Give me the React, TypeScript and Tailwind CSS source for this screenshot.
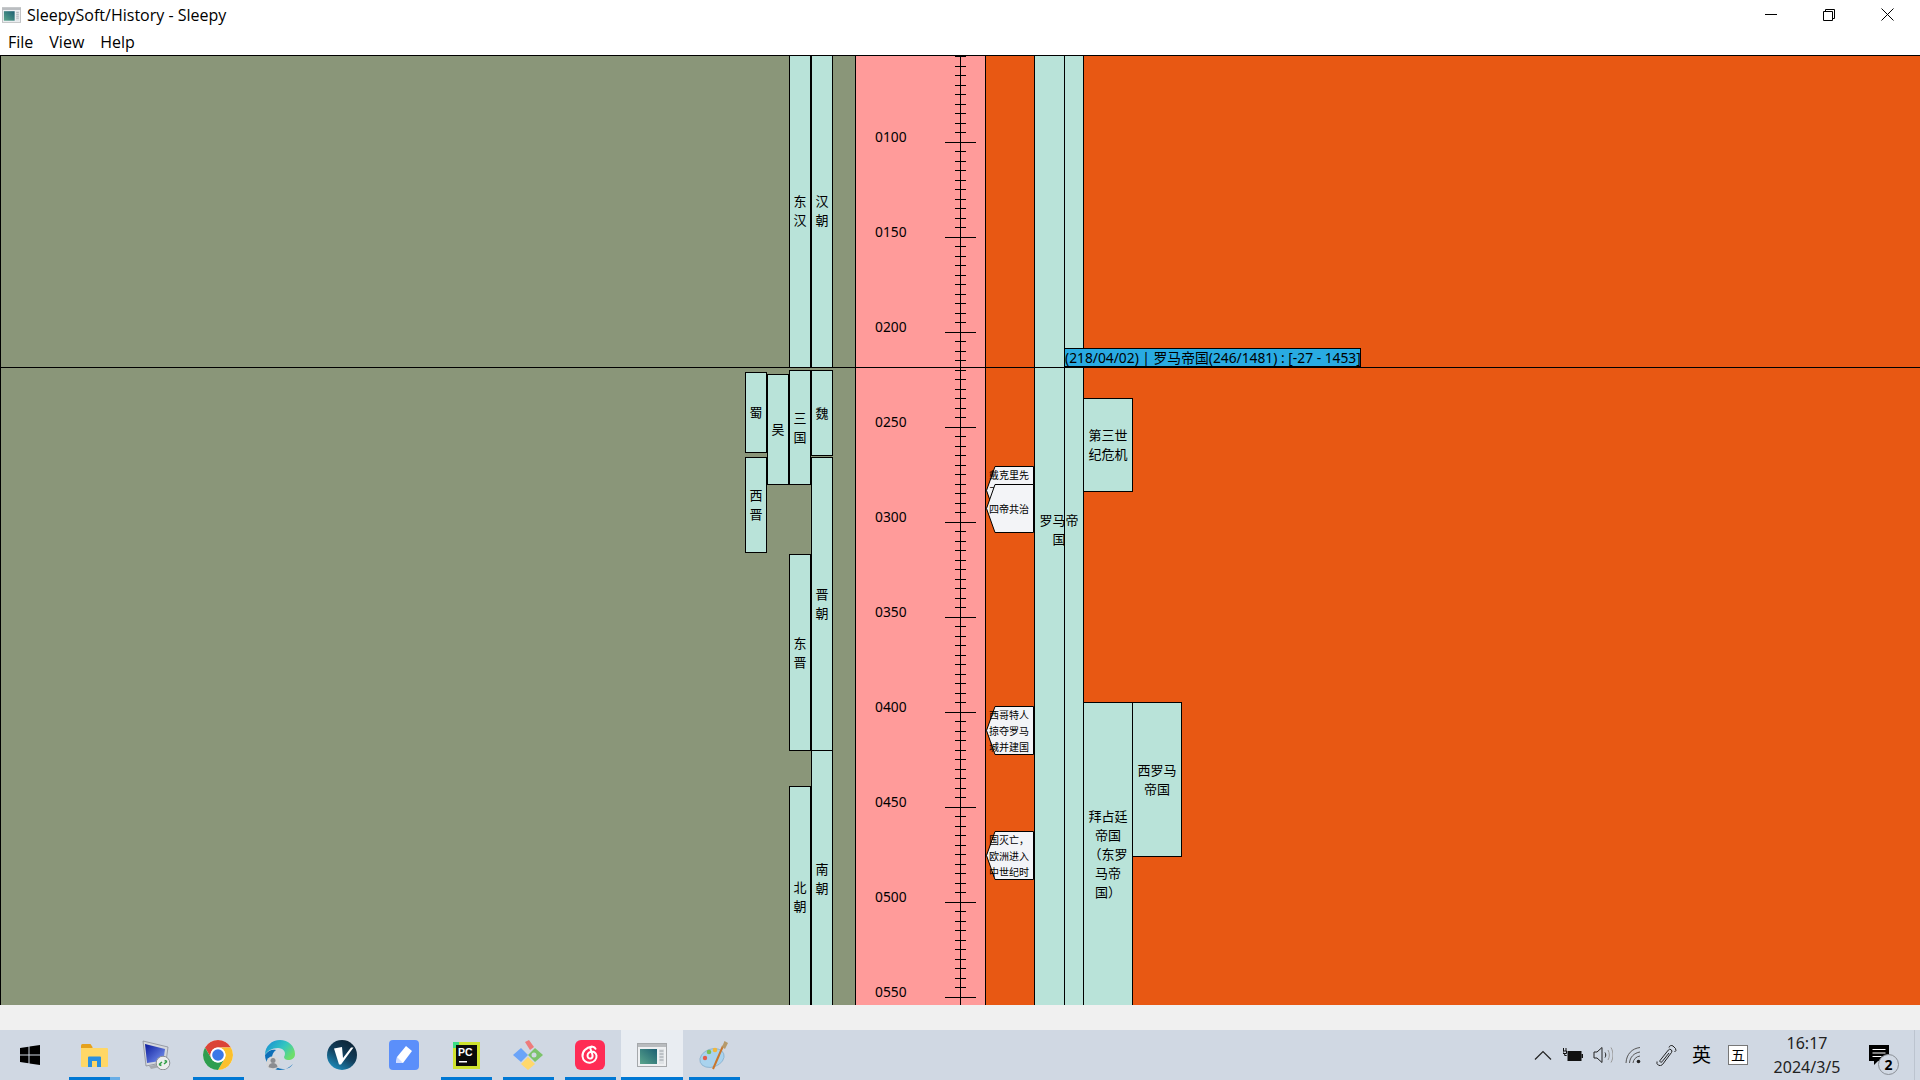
import React from "react";

const blocks = [
  { pos: "left-[789px] top-[-2px] w-[22px] h-[315px]", text: "东汉" },
  { pos: "left-[811px] top-[-2px] w-[22px] h-[315px]", text: "汉朝" },
  { pos: "left-[745px] top-[317px] w-[22px] h-[81px]", text: "蜀" },
  { pos: "left-[745px] top-[402px] w-[22px] h-[96px]", text: "西晋" },
  { pos: "left-[767px] top-[319px] w-[22px] h-[111px]", text: "吴" },
  { pos: "left-[789px] top-[315px] w-[22px] h-[115px]", text: "三国" },
  { pos: "left-[811px] top-[315px] w-[22px] h-[86px]", text: "魏" },
  { pos: "left-[811px] top-[402px] w-[22px] h-[294px]", text: "晋朝" },
  { pos: "left-[789px] top-[499px] w-[22px] h-[197px]", text: "东晋" },
  { pos: "left-[811px] top-[695px] w-[22px] h-[257px]", text: "南朝" },
  { pos: "left-[789px] top-[731px] w-[22px] h-[221px]", text: "北朝" },
  { pos: "left-[1034px] top-[-2px] w-[50px] h-[954px]", text: "罗马帝国" },
  { pos: "left-[1083px] top-[343px] w-[50px] h-[94px]", text: "第三世纪危机" },
  { pos: "left-[1083px] top-[647px] w-[50px] h-[305px]", text: "拜占廷帝国（东罗马帝国）" },
  { pos: "left-[1132px] top-[647px] w-[50px] h-[155px]", text: "西罗马帝国" },
];

const yearLabels = [
  { pos: "top-[73px]", text: "0100" },
  { pos: "top-[168px]", text: "0150" },
  { pos: "top-[263px]", text: "0200" },
  { pos: "top-[358px]", text: "0250" },
  { pos: "top-[453px]", text: "0300" },
  { pos: "top-[548px]", text: "0350" },
  { pos: "top-[643px]", text: "0400" },
  { pos: "top-[738px]", text: "0450" },
  { pos: "top-[833px]", text: "0500" },
  { pos: "top-[928px]", text: "0550" },
];

const events = [
  { pos: "top-[411px]", lines: ["戴克里先", "了", "\u00a0"] },
  { pos: "top-[429px]", lines: ["四帝共治"] },
  { pos: "top-[651px]", lines: ["西哥特人", "掠夺罗马", "城并建国"] },
  { pos: "top-[776px]", lines: ["国灭亡，", "欧洲进入", "中世纪时"] },
];

function Ruler() {
  // one tick every 5 years, 9.5px apart
  const ticks = [];
  for (let k = -9; k <= 90; k++) {
    const y = Math.floor(87.3 + 9.5 * k) + 0.5;
    const major = k % 10 === 0;
    ticks.push(
      <line key={k} x1={major ? 0 : 10} x2={major ? 31 : 21} y1={y} y2={y} stroke="#000" />
    );
  }
  return (
    <svg className="absolute left-[945px] top-0 w-[32px] h-[950px]" viewBox="0 0 32 950" shapeRendering="crispEdges">
      <line x1="15.5" x2="15.5" y1="0" y2="950" stroke="#000" />
      {ticks}
    </svg>
  );
}

function EventTag({ pos, lines }: { pos: string; lines: string[] }) {
  return (
    <div className={`absolute left-[985px] w-[49px] h-[49px] ${pos}`}>
      <svg className="absolute inset-0 w-full h-full" viewBox="0 0 49 49">
        <polygon points="10,0.5 48.5,0.5 48.5,48.5 10,48.5 1.5,24.5" fill="#f3f4f7" stroke="#000" />
      </svg>
      <div className="relative h-full flex flex-col justify-center pl-[4px] text-[10px] leading-[16px] text-black whitespace-nowrap">
        {lines.map((l) => (
          <div key={l}>{l}</div>
        ))}
      </div>
    </div>
  );
}

function Chart() {
  return (
    <div className="relative h-[950px] bg-[#8a9679] overflow-hidden">
      <div className="absolute left-[855px] top-0 w-[131px] h-full bg-[#ff9b9a] border-x border-black" />
      <div className="absolute left-[985px] top-0 right-0 h-full bg-[#e85813] border-l border-black" />
      {yearLabels.map((y) => (
        <div key={y.text} className={`absolute left-[875px] h-[18px] leading-[18px] text-[13.800px] text-black ${y.pos}`}>
          {y.text}
        </div>
      ))}
      <Ruler />
      {blocks.map((b) => (
        <div
          key={b.text}
          className={`absolute flex items-center justify-center bg-[#b9e3d9] border border-black px-[3px] text-[13px] leading-[19px] text-center text-black ${b.pos}`}
        >
          <span className="w-full">{b.text}</span>
        </div>
      ))}
      {events.map((e) => (
        <EventTag key={e.lines[0]} pos={e.pos} lines={e.lines} />
      ))}
      {/* chart frame and crosshair */}
      <div className="absolute left-0 right-0 top-0 h-px bg-black" />
      <div className="absolute left-0 top-0 bottom-0 w-px bg-black" />
      <div className="absolute left-0 right-0 top-[312px] h-px bg-black" />
      <div className="absolute left-[1064px] top-0 bottom-0 w-px bg-black" />
      <div className="absolute left-[1064px] top-[293px] w-[297px] h-[19px] bg-[#29abe2] border border-black text-[13.800px] leading-[17px] text-black whitespace-nowrap">
        (218/04/02) | 罗马帝国(246/1481) : [-27 - 1453]
      </div>
    </div>
  );
}

function AppIcon({ className }: { className: string }) {
  return (
    <svg className={className} viewBox="0 0 30 24">
      <rect x="0.5" y="0.5" width="29" height="23" fill="#eef0f2" stroke="#a5a8ab" />
      <rect x="1" y="1" width="28" height="3" fill="#b8bbbe" />
      <rect x="3" y="6" width="17" height="15" fill="url(#appPanel)" />
      <rect x="22" y="6" width="5" height="15" fill="#dfe3e6" />
      <path d="M22.5 8h4M22.5 11h4M22.5 14h4M22.5 17h4" stroke="#9aa0a6" />
      <defs>
        <linearGradient id="appPanel" x1="0" y1="1" x2="1" y2="0">
          <stop offset="0" stopColor="#5aa58c" />
          <stop offset="1" stopColor="#1c5f72" />
        </linearGradient>
      </defs>
    </svg>
  );
}

const iconClass = "w-[30px] h-[30px]";

function FolderIcon() {
  return (
    <svg className={iconClass} viewBox="0 0 30 30">
      <path d="M2 5.5a1.5 1.5 0 0 1 1.5-1.5h8l2 3v3H2z" fill="#e5a11c" />
      <path d="M2 8h26a1 1 0 0 1 1 1v17a1 1 0 0 1-1 1H3a1 1 0 0 1-1-1z" fill="#ffd766" />
      <path d="M9 27V17.5a1 1 0 0 1 1-1h11a1 1 0 0 1 1 1V27h-4v-6h-5v6z" fill="#2a8fe0" />
    </svg>
  );
}

function RemoteIcon() {
  return (
    <svg className={iconClass} viewBox="0 0 30 30">
      <path d="M2 1l25 6-2 15-20 4z" fill="#d4d7dc" stroke="#7e838c" strokeWidth="0.7" />
      <path d="M4 4l20 5-1.6 11.500L6 23z" fill="url(#remoteBlue)" />
      <path d="M8 26l11-2v3l-9 2z" fill="#a6a9ae" />
      <circle cx="22" cy="23" r="6.800" fill="#eceeee" stroke="#8d9094" />
      <path d="M18 24.500l3-2.500M18 24.500l2.400 1M26 21.500l-3 2.500M26 21.500l-2.400-1" stroke="#2f9e44" strokeWidth="1.500" />
      <defs>
        <linearGradient id="remoteBlue" x1="0" y1="0" x2="1" y2="1">
          <stop offset="0" stopColor="#0a1a9c" />
          <stop offset="1" stopColor="#7f9cf5" />
        </linearGradient>
      </defs>
    </svg>
  );
}

function ChromeIcon() {
  const seg = "M2.010 7.500A15 15 0 0 1 27.990 7.500H15A7.500 7.500 0 0 0 8.500 18.750Z";
  return (
    <svg className={iconClass} viewBox="0 0 30 30">
      <circle cx="15" cy="15" r="15" fill="#fff" />
      <path d={seg} fill="#db4437" />
      <path d={seg} fill="#fbc02d" transform="rotate(120 15 15)" />
      <path d={seg} fill="#2e9e4f" transform="rotate(240 15 15)" />
      <circle cx="15" cy="15" r="7.500" fill="#fff" />
      <circle cx="15" cy="15" r="5.800" fill="#3b78e7" />
    </svg>
  );
}

function EdgeIcon() {
  return (
    <svg className={iconClass} viewBox="0 0 30 30">
      <path d="M0 15C0 6 7 0 15 0c8 0 15 6 15 14 0 4-3 6-7 6-2 0-4-1-4-3 3-5-1-9-6-9-6 0-11 3-13 7z" fill="url(#edgeTop)" />
      <path d="M0 15c3-5 8-6 11-5-3 2-4 5-4 8 0 6 5 11 11 11 5 0 8-2 10-5-3 3-8 6-13 6C7 30 0 23 0 15z" fill="#0c6fb8" />
      <circle cx="8" cy="23" r="6.800" fill="#d5d6d8" />
      <circle cx="8" cy="20.500" r="2.500" fill="#8a8c90" />
      <path d="M3.500 27c.5-3 2-4 4.500-4s4 1 4.500 4c-2 1.500-7 1.500-9 0z" fill="#8a8c90" />
      <defs>
        <linearGradient id="edgeTop" x1="0" y1="0" x2="1" y2="0.600">
          <stop offset="0" stopColor="#1488d8" />
          <stop offset="0.600" stopColor="#33c6c0" />
          <stop offset="1" stopColor="#6ede6a" />
        </linearGradient>
      </defs>
    </svg>
  );
}

function VIcon() {
  return (
    <svg className={iconClass} viewBox="0 0 30 30">
      <circle cx="15" cy="15" r="15" fill="url(#vBlue)" />
      <path d="M7 8.500l8-1.500 1 11L24 7.500h2.500L14 24.500h-2z" fill="#fff" />
      <defs>
        <linearGradient id="vBlue" x1="0.800" y1="0" x2="0.200" y2="1">
          <stop offset="0" stopColor="#0d2233" />
          <stop offset="0.500" stopColor="#123f5c" />
          <stop offset="1" stopColor="#1f93c4" />
        </linearGradient>
      </defs>
    </svg>
  );
}

function PenIcon() {
  return (
    <svg className={iconClass} viewBox="0 0 30 30">
      <rect width="30" height="30" rx="4" fill="#5b8ffa" />
      <path d="M17 6l6 5-9 12H7l1-6z" fill="#fff" />
      <path d="M8 17l6 6H7z" fill="#cfdcff" />
    </svg>
  );
}

function PyCharmIcon() {
  return (
    <svg className="w-[27px] h-[27px]" viewBox="0 0 27 27">
      <rect width="27" height="27" fill="#cfe32e" />
      <rect x="0" y="0" width="6" height="6" fill="#3ddc84" />
      <rect x="3" y="3" width="21" height="21" fill="#0b0b0b" />
      <text x="5" y="14" fontFamily="Liberation Sans" fontWeight="700" fontSize="10.500" fill="#fff">PC</text>
      <rect x="6" y="19" width="8" height="1.500" fill="#fff" />
    </svg>
  );
}

function GitIcon() {
  return (
    <svg className={iconClass} viewBox="0 0 30 30">
      <polygon points="12,2 16,0 21,7 17,10" fill="#ee7b7b" />
      <polygon points="8,8 15,15 8,22 0,15" fill="#6ba4f8" />
      <polygon points="22,8 30,15 22,22 15,15" fill="#7cc36b" />
      <polygon points="15,17 22,24 15,30 8,24" fill="#ffd86b" />
      <circle cx="21" cy="15" r="2.500" fill="#d0d8e3" />
    </svg>
  );
}

function NeteaseIcon() {
  return (
    <svg className={iconClass} viewBox="0 0 30 30">
      <rect width="30" height="30" rx="6" fill="#ff2c55" />
      <path d="M17 6.500c-6 1-10 5-9.500 10 .4 4 4 6.500 7.500 6.200 4-.3 7-3.500 6.500-7-.4-3-3-4.500-5.500-4-2.500.5-4 2.800-3.300 5 .5 1.700 2.500 2.400 3.800 1.500 1.200-.8 1.300-2.400.8-4L15.500 9c-.3-1.300 1-2.800 3-2 1 .4 1.500 1 2 1.800" fill="none" stroke="#fff" strokeWidth="2" strokeLinecap="round" />
    </svg>
  );
}

function PaintIcon() {
  return (
    <svg className={iconClass} viewBox="0 0 30 30">
      <ellipse cx="13" cy="18" rx="12.500" ry="9" fill="#a9d3ee" stroke="#7aa5c4" strokeWidth="0.600" transform="rotate(-20 13 18)" />
      <circle cx="6" cy="18" r="2.200" fill="#e35d4d" />
      <circle cx="10" cy="12" r="2.300" fill="#7cbf56" />
      <circle cx="16" cy="10" r="2.300" fill="#f1b73c" />
      <path d="M14 29L24 6" stroke="#c9762c" strokeWidth="2" />
      <path d="M23 7l2.500-6 3.500 2-3 6z" fill="#b69a6b" />
    </svg>
  );
}

function TaskSlot({ children, active, split }: { children: React.ReactNode; active?: string; split?: boolean }) {
  return (
    <div className={`relative w-[62px] h-full flex items-center justify-center ${active === "open" ? "bg-[#e9edf2]" : ""}`}>
      {children}
      {active === "open" && <div className="absolute left-0 right-0 bottom-0 h-[3px] bg-[#0078d4]" />}
      {active === "run" && !split && <div className="absolute left-[6px] w-[51px] bottom-0 h-[3px] bg-[#0078d4]" />}
      {split && (
        <>
          <div className="absolute left-[6px] w-[41px] bottom-0 h-[3px] bg-[#0078d4]" />
          <div className="absolute left-[47px] w-[10px] bottom-0 h-[3px] bg-[#69aee6]" />
        </>
      )}
    </div>
  );
}

function Taskbar() {
  return (
    <div className="h-[50px] bg-[#d0d8e3] flex items-center pl-px">
      <TaskSlot>
        <svg className="w-[20px] h-[20px] mr-[4px]" viewBox="0 0 20 20">
          <path d="M0 3l8.500-1.200V9.500H0zM9.500 1.600L20 0v9.500H9.500zM0 10.500h8.500v7.700L0 17zM9.500 10.500H20V20L9.500 18.400z" fill="#000" />
        </svg>
      </TaskSlot>
      <TaskSlot active="run" split><FolderIcon /></TaskSlot>
      <TaskSlot><RemoteIcon /></TaskSlot>
      <TaskSlot active="run"><ChromeIcon /></TaskSlot>
      <TaskSlot><EdgeIcon /></TaskSlot>
      <TaskSlot><VIcon /></TaskSlot>
      <TaskSlot><PenIcon /></TaskSlot>
      <TaskSlot active="run"><PyCharmIcon /></TaskSlot>
      <TaskSlot active="run"><GitIcon /></TaskSlot>
      <TaskSlot active="run"><NeteaseIcon /></TaskSlot>
      <TaskSlot active="open"><AppIcon className="w-[30px] h-[24px]" /></TaskSlot>
      <TaskSlot active="run"><PaintIcon /></TaskSlot>

      <div className="ml-auto flex items-center h-full text-black">
        <div className="w-[30px] flex justify-center">
          <svg className="w-[18px] h-[12px]" viewBox="0 0 18 12">
            <path d="M1 10.500L9 2.500l8 8" fill="none" stroke="#222" strokeWidth="1.200" />
          </svg>
        </div>
        <div className="w-[30px] flex justify-center">
          <svg className="w-[20px] h-[14px]" viewBox="0 0 20 14">
            <path d="M0.500 0v3M3 0v3M0 3h3.500v2.500h-3.500zM1.700 5.500v2h2" fill="none" stroke="#111" />
            <rect x="4.500" y="3" width="14" height="10" fill="#111" />
            <rect x="18.500" y="6" width="1.500" height="4" fill="#111" />
          </svg>
        </div>
        <div className="w-[30px] flex justify-center">
          <svg className="w-[20px] h-[18px]" viewBox="0 0 20 18">
            <path d="M1 6h3l5-4.500v15L4 12H1z" fill="none" stroke="#222" />
            <path d="M12 6.500c1 1.500 1 3.500 0 5" fill="none" stroke="#222" />
            <path d="M15 4c1.800 3 1.800 7 0 10M18 1.500c2.600 4.500 2.600 10.500 0 15" fill="none" stroke="#999" />
          </svg>
        </div>
        <div className="w-[30px] flex justify-center">
          <svg className="w-[16px] h-[18px]" viewBox="0 0 16 18">
            <path d="M1 17C1.500 8 7 2.500 15 1.500M4.500 17c.5-6 4.500-10 10.500-11M8 17c.4-3.500 3-6.500 7-7" fill="none" stroke="#555" />
            <circle cx="13.500" cy="15.500" r="1.800" fill="#222" />
          </svg>
        </div>
        <div className="w-[37px] flex justify-center">
          <svg className="w-[21px] h-[21px]" viewBox="0 0 21 21">
            <path d="M1 16.500a3.200 3.200 0 0 0 5.500 3L15.500 7.500a2 2 0 0 0-3.200-2.400L4 15.500a1.200 1.200 0 0 0 2 1.300L13 8M13 2.500a2.500 2.500 0 0 1 4-1.500l2.500 2.500a2.500 2.500 0 0 1-1 3.500" fill="none" stroke="#222" />
          </svg>
        </div>
        <div className="w-[33px] text-center text-[19px] leading-none">英</div>
        <div className="w-[40px] flex justify-center">
          <div className="w-[20px] h-[20px] bg-white border border-[#777] flex items-center justify-center text-[14px] leading-none">五</div>
        </div>
        <div className="w-[98px] flex flex-col items-center text-[16px] leading-[24px] text-[#222]">
          <div>16:17</div>
          <div>2024/3/5</div>
        </div>
        <div className="relative w-[46px] h-full flex justify-center">
          <svg className="absolute left-[13px] top-[15px] w-[20px] h-[20px]" viewBox="0 0 20 20">
            <path d="M0 0h20v16H9l-4 4v-4H0z" fill="#000" />
            <path d="M3.500 4.500h13M3.500 8h13M3.500 11.500h9" stroke="#fff" />
          </svg>
          <div className="absolute left-[22px] top-[24px] w-[21px] h-[21px] rounded-full bg-[#d0d8e3] border border-[#8a8f96] flex items-center justify-center text-[14px] font-bold leading-none">
            2
          </div>
        </div>
        <div className="w-[18px] h-full flex justify-center">
          <div className="w-px h-full bg-[#bcc4cf] ml-[6px]" />
        </div>
      </div>
    </div>
  );
}

export default function App() {
  return (
    <div className="w-[1920px] h-[1080px] overflow-hidden flex flex-col bg-white font-['Noto_Sans','Noto_Sans_CJK_SC',sans-serif]">
      {/* Title bar */}
      <div className="h-[29px] flex items-center bg-white">
        <AppIcon className="ml-[2px] w-[19px] h-[16px]" />
        <span className="ml-[6px] text-[16px] text-black font-['Open_Sans','Noto_Sans_CJK_SC',sans-serif]">SleepySoft/History - Sleepy</span>
        <div className="ml-auto flex h-full items-center pr-[4px]">
          <div className="w-[58px] flex justify-center">
            <div className="w-[12px] h-px bg-black" />
          </div>
          <div className="w-[58px] flex justify-center">
            <svg className="w-[12px] h-[12px]" viewBox="0 0 12 12">
              <path d="M0.500 2.500h9v9h-9zM2.500 2.500v-2h9v9h-2" fill="none" stroke="#000" />
            </svg>
          </div>
          <div className="w-[58px] flex justify-center">
            <svg className="w-[13px] h-[13px]" viewBox="0 0 13 13">
              <path d="M0.500 0.500l12 12M12.500 0.500l-12 12" fill="none" stroke="#000" />
            </svg>
          </div>
        </div>
      </div>
      {/* Menu */}
      <div className="h-[26px] flex items-center pl-[8px] gap-[16px] text-[16px] text-black font-['Open_Sans',sans-serif]">
        <span>File</span>
        <span>View</span>
        <span>Help</span>
      </div>
      <Chart />
      <div className="h-[25px] bg-[#f0f0f0]" />
      <Taskbar />
    </div>
  );
}
